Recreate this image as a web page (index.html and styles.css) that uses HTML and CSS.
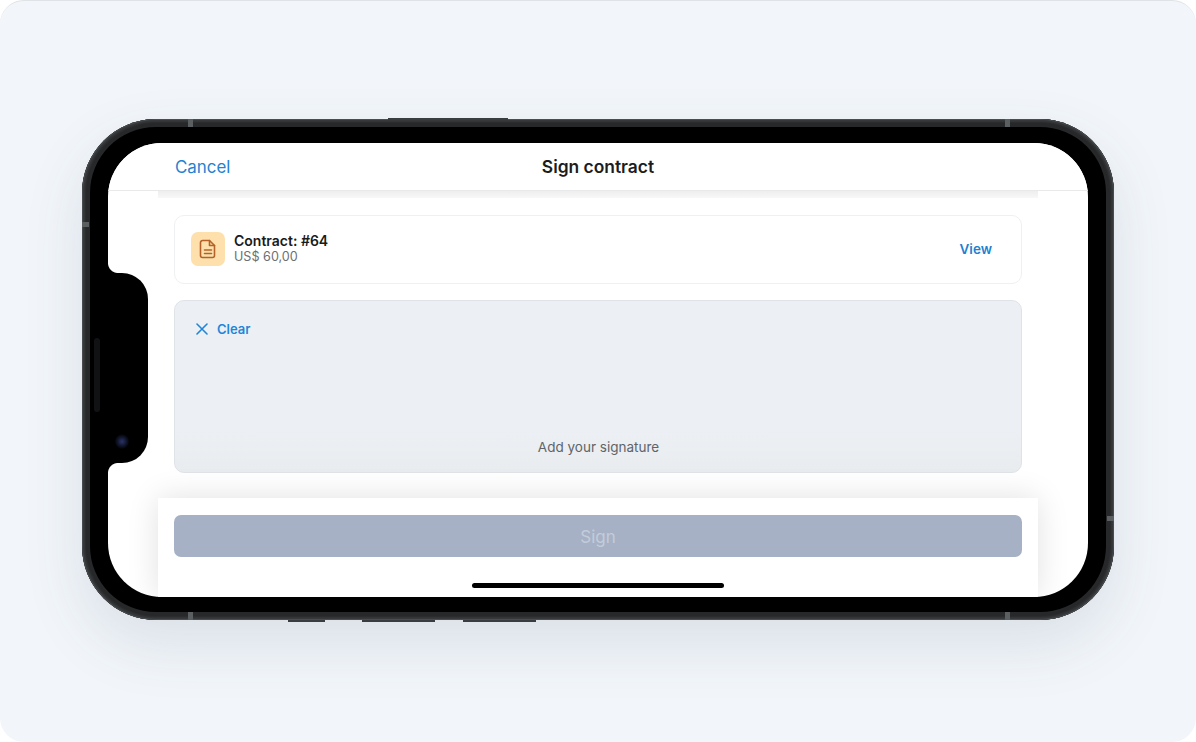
FILE: index.html
```html
<!DOCTYPE html>
<html lang="en">
  <head>
    <meta charset="UTF-8" />
    <meta name="viewport" content="width=device-width, initial-scale=1.0" />
    <title>Sign contract</title>
    <link rel="stylesheet" href="styles.css">
  </head>
  <body>
    <div class="page">
      <div class="phone">
        <span class="edge edge-speaker"></span>
        <span class="edge edge-key edge-key-1"></span>
        <span class="edge edge-key edge-key-2"></span>
        <span class="edge edge-key edge-key-3"></span>
        <span class="band band-top-left"></span>
        <span class="band band-top-right"></span>
        <span class="band band-bottom-left"></span>
        <span class="band band-bottom-right"></span>
        <span class="band band-left"></span>
        <span class="band band-right"></span>
        <div class="screen">
          <header class="nav">
            <a class="nav-cancel" href="#">Cancel</a>
            <h1 class="nav-title">Sign contract</h1>
          </header>
          <div class="sheet">
            <div class="sheet-shade"></div>
            <div class="sheet-body">
              <div class="contract-card">
                <div class="contract-icon">
                  <svg width="18" height="20" viewBox="0 0 18 20" fill="none" stroke="#b5622a" stroke-width="1.6" stroke-linecap="round" stroke-linejoin="round">
                    <path d="M3.5 1.5h7l5 5v10a2 2 0 0 1-2 2h-10a2 2 0 0 1-2-2v-13a2 2 0 0 1 2-2z" />
                    <path d="M10.5 1.5v5h5" />
                    <path d="M5.5 11h7M5.5 14.5h7" />
                  </svg>
                </div>
                <div class="contract-info">
                  <span class="contract-name">Contract: #64</span>
                  <span class="contract-price">US$ 60,00</span>
                </div>
                <a class="contract-view" href="#">View</a>
              </div>
              <div class="signature">
                <a class="clear" href="#">
                  <svg width="12" height="12" viewBox="0 0 12 12" fill="none" stroke="#1f86d8" stroke-width="1.6" stroke-linecap="round">
                    <path d="M1 1l10 10M11 1L1 11" />
                  </svg>
                  Clear
                </a>
                <p class="signature-hint">Add your signature</p>
              </div>
            </div>
            <footer class="actions">
              <button class="sign-button" type="button">Sign</button>
              <div class="home-bar"></div>
            </footer>
          </div>
          <div class="notch">
            <span class="camera"></span>
          </div>
        </div>
        <span class="speaker"></span>
      </div>
    </div>
  </body>
</html>
```

FILE: styles.css
```css
* {
  box-sizing: border-box;
}
html,
body {
  margin: 0;
  height: 100%;
  background-color: #fff;
  overflow: hidden;
}
body {
  font-family: Inter, "Liberation Sans", sans-serif;
}
a {
  text-decoration: none;
}
.page {
  height: 742px;
  padding: 118px 82px 0;
  background-color: #f2f6fa;
  border-top: 1px solid #dfe3e6;
  border-radius: 24px;
}
.phone {
  position: relative;
  width: 1032px;
  height: 501px;
  padding: 24px 26px 23px;
  background-color: #000;
  border-radius: 74px;
  box-shadow: inset 0 0 0 1px #4a4d4f, inset 0 0 2px 3px #37393b, inset 0 0 0 8px #26282a,
    0 24px 60px rgba(60, 80, 110, 0.13);
}

/* little bits on the outside of the frame */
.edge {
  position: absolute;
  height: 2px;
  background-color: #3a3d40;
}
.edge-speaker {
  top: -1px;
  left: 306px;
  width: 120px;
}
.edge-key {
  bottom: -2px;
}
.edge-key-1 {
  left: 206px;
  width: 37px;
}
.edge-key-2 {
  left: 280px;
  width: 73px;
}
.edge-key-3 {
  left: 381px;
  width: 73px;
}
.band {
  position: absolute;
  background-color: #5c5f62;
}
.band-top-left,
.band-top-right,
.band-bottom-left,
.band-bottom-right {
  width: 5px;
  height: 8px;
}
.band-top-left,
.band-top-right {
  top: 0;
}
.band-bottom-left,
.band-bottom-right {
  bottom: 0;
}
.band-top-left,
.band-bottom-left {
  left: 106px;
}
.band-top-right,
.band-bottom-right {
  left: 923px;
}
.band-left,
.band-right {
  width: 7px;
  height: 5px;
}
.band-left {
  top: 103px;
  left: 0;
}
.band-right {
  top: 397px;
  right: 0;
}

.screen {
  position: relative;
  display: flex;
  flex-direction: column;
  height: 100%;
  background-color: #fff;
  border-radius: 54px;
  overflow: hidden;
}
.nav {
  position: relative;
  display: flex;
  align-items: center;
  justify-content: center;
  flex: none;
  height: 48px;
  background-color: #fff;
  border-bottom: 1px solid #e8e9ea;
}
.nav-cancel {
  position: absolute;
  left: 67px;
  font-size: 16.9px;
  color: #2383d1;
}
.nav-title {
  margin: 0;
  font-size: 17.4px;
  font-weight: 600;
  color: #1c1c1e;
}
.sheet {
  display: flex;
  flex-direction: column;
  flex: 1;
  margin: 0 50px;
}
.sheet-shade {
  flex: none;
  height: 7px;
  background: linear-gradient(#eeeeee, #f8f8f8);
}
.sheet-body {
  display: flex;
  flex-direction: column;
  gap: 16px;
  flex: 1;
  padding: 17px 16px 0;
}
.contract-card {
  display: flex;
  align-items: center;
  gap: 9px;
  height: 69px;
  padding: 0 29px 2px 16px;
  background-color: #fff;
  border: 1px solid #eff0f1;
  border-radius: 10px;
}
.contract-icon {
  display: flex;
  align-items: center;
  justify-content: center;
  flex: none;
  width: 34px;
  height: 34px;
  background-color: #fde0ab;
  border-radius: 7px;
}
.contract-info {
  display: flex;
  flex-direction: column;
  flex: 1;
}
.contract-name {
  font-size: 14px;
  font-weight: 600;
  line-height: 16px;
  color: #1a1a1a;
}
.contract-price {
  font-size: 12.6px;
  line-height: 16px;
  color: #6c6f72;
}
.contract-view {
  font-size: 13.5px;
  font-weight: 600;
  color: #2280d0;
}
.signature {
  display: flex;
  flex-direction: column;
  justify-content: space-between;
  height: 173px;
  padding: 20px 20px 17px 21px;
  background: linear-gradient(#ecf0f4 75%, #e9ecef);
  border: 1px solid #dfe3e7;
  border-radius: 10px;
}
.clear {
  display: flex;
  align-items: center;
  gap: 9px;
  font-size: 13px;
  font-weight: 600;
  color: #1f86d8;
}
.signature-hint {
  margin: 0;
  text-align: center;
  font-size: 13.5px;
  color: #606468;
}
.actions {
  position: relative;
  flex: none;
  height: 99px;
  padding: 17px 16px 0;
  background-color: #fff;
  box-shadow: 0 0 30px rgba(0, 0, 0, 0.12);
}
.sign-button {
  display: block;
  width: 100%;
  height: 42px;
  padding: 1px 0 0;
  font-family: inherit;
  font-size: 17px;
  color: #c3ccd9;
  background-color: #a6b1c5;
  border: none;
  border-radius: 7px;
}
.home-bar {
  width: 252px;
  height: 5px;
  margin: 26px auto 0;
  background-color: #000;
  border-radius: 3px;
}
.notch {
  position: absolute;
  top: 130px;
  left: 0;
  width: 40px;
  height: 190px;
  background-color: #000;
  border-radius: 0 26px 26px 0;
}
.notch::before,
.notch::after {
  content: "";
  position: absolute;
  left: 0;
  width: 10px;
  height: 10px;
}
.notch::before {
  top: -10px;
  background: radial-gradient(circle at 100% 0, transparent 9.5px, #000 10.5px);
}
.notch::after {
  bottom: -10px;
  background: radial-gradient(circle at 100% 100%, transparent 9.5px, #000 10.5px);
}
.speaker {
  position: absolute;
  top: 219px;
  left: 12px;
  width: 6px;
  height: 74px;
  background-color: #111213;
  border-radius: 3px;
}
.camera {
  position: absolute;
  top: 161px;
  left: 7px;
  width: 14px;
  height: 15px;
  background: radial-gradient(circle, #2a3566 0, #10142a 45%, #000 75%);
  border-radius: 50%;
}
```
